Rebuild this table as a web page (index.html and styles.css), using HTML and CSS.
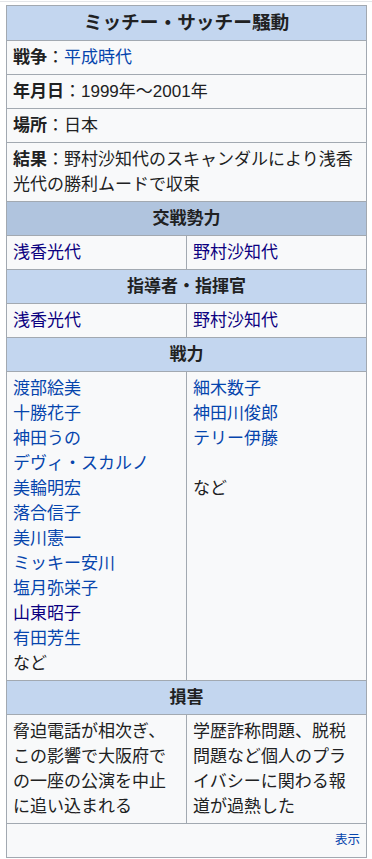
FILE: index.html
```html
<!DOCTYPE html>
<html lang="ja">
<head>
<meta charset="utf-8">
<link rel="stylesheet" href="styles.css">
</head>
<body>
<div class="topline"></div>
<table class="infobox">
  <colgroup><col class="half"><col class="half"></colgroup>
  <tr><th colspan="2" class="title">ミッチー・サッチー騒動</th></tr>
  <tr><td colspan="2"><b>戦争</b>：<a href="#" class="link">平成時代</a></td></tr>
  <tr><td colspan="2"><b>年月日</b>：1999年～2001年</td></tr>
  <tr><td colspan="2"><b>場所</b>：日本</td></tr>
  <tr><td colspan="2"><b>結果</b>：野村沙知代のスキャンダルにより浅香光代の勝利ムードで収束</td></tr>
  <tr><th colspan="2" class="section dark">交戦勢力</th></tr>
  <tr><td><a href="#" class="visited">浅香光代</a></td><td><a href="#" class="visited">野村沙知代</a></td></tr>
  <tr><th colspan="2" class="section">指導者・指揮官</th></tr>
  <tr><td><a href="#" class="visited">浅香光代</a></td><td><a href="#" class="visited">野村沙知代</a></td></tr>
  <tr><th colspan="2" class="section">戦力</th></tr>
  <tr class="top">
    <td>
      <a href="#" class="link">渡部絵美</a><br>
      <a href="#" class="link">十勝花子</a><br>
      <a href="#" class="link">神田うの</a><br>
      <a href="#" class="link">デヴィ・スカルノ</a><br>
      <a href="#" class="link">美輪明宏</a><br>
      <a href="#" class="link">落合信子</a><br>
      <a href="#" class="link">美川憲一</a><br>
      <a href="#" class="link">ミッキー安川</a><br>
      <a href="#" class="link">塩月弥栄子</a><br>
      <a href="#" class="visited">山東昭子</a><br>
      <a href="#" class="link">有田芳生</a><br>
      など
    </td>
    <td>
      <a href="#" class="link">細木数子</a><br>
      <a href="#" class="link">神田川俊郎</a><br>
      <a href="#" class="link">テリー伊藤</a><br>
      <br>
      など
    </td>
  </tr>
  <tr><th colspan="2" class="section">損害</th></tr>
  <tr class="top">
    <td>脅迫電話が相次ぎ、この影響で大阪府での一座の公演を中止に追い込まれる</td>
    <td>学歴詐称問題、脱税問題など個人のプライバシーに関わる報道が過熱した</td>
  </tr>
  <tr><td colspan="2" class="footer"><a href="#" class="link">表示</a></td></tr>
</table>
</body>
</html>
```

FILE: styles.css
```css
html, body {
  margin: 0;
  padding: 0;
  background: #ffffff;
}
body {
  font-family: "Liberation Sans", "Noto Sans CJK JP", sans-serif;
  color: #202122;
}
.topline {
  height: 1px;
  margin-top: 1px;
  background: #e3e5e8;
}
.infobox {
  margin: 3px 0 0 6px;
  width: 361px;
  table-layout: fixed;
  border-collapse: collapse;
  border: 1px solid #a2a9b1;
  background: #f8f9fa;
  font-size: 17px;
  line-height: 25px;
}
.half {
  width: 50%;
}
.infobox th,
.infobox td {
  border: 1px solid #a2a9b1;
  padding: 4px 6px;
  text-align: left;
  vertical-align: middle;
  word-break: break-all;
}
.infobox th {
  text-align: center;
  font-weight: bold;
  background: #c3d6ef;
}
.infobox th.title {
  font-size: 18.7px;
  padding: 4px 6px 5px;
}
.infobox th.dark {
  background: #b0c4de;
}
.infobox tr.top td {
  vertical-align: top;
}
.infobox td.footer {
  text-align: right;
  font-size: 12.5px;
  padding: 4px 6px;
}
.link {
  color: #0645ad;
  text-decoration: none;
}
.visited {
  color: #0b0080;
  text-decoration: none;
}
b {
  font-weight: bold;
}
```
